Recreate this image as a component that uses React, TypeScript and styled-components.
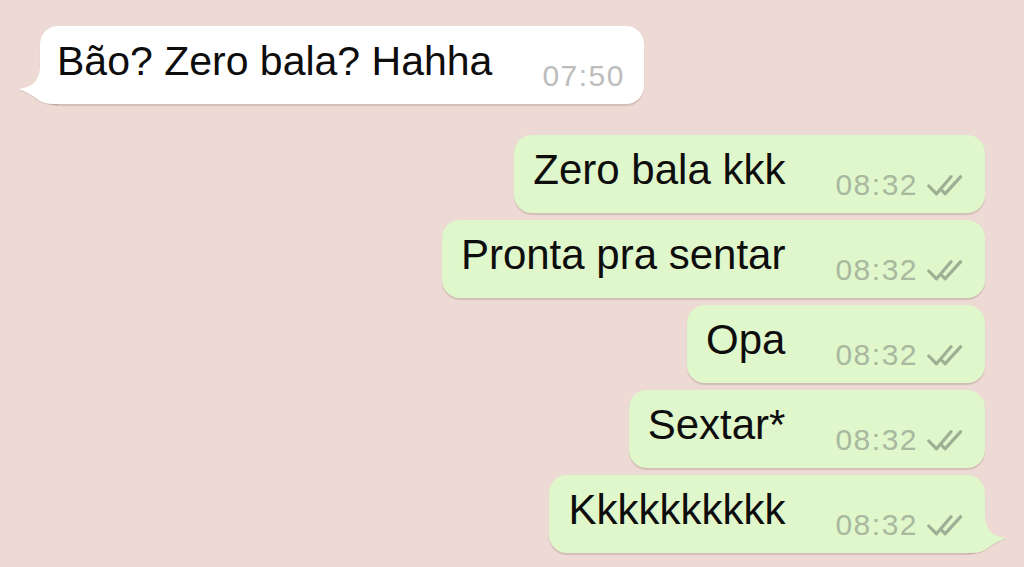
import React from "react";
import styled, { createGlobalStyle } from "styled-components";

const Global = createGlobalStyle`
  html, body { margin: 0; padding: 0; }
  body { font-family: "Liberation Sans", Arial, sans-serif; }
`;

const Screen = styled.div`
  width: 1024px;
  height: 567px;
  overflow: hidden;
  background: #eedad5;
  display: flex;
  flex-direction: column;
  padding: 26px 39px 0 40px;
  box-sizing: border-box;
`;

const Bubble = styled.div<{ $out?: boolean; $after?: number }>`
  position: relative;
  align-self: ${(p) => (p.$out ? "flex-end" : "flex-start")};
  display: flex;
  align-items: flex-start;
  gap: 50px;
  padding: 10px ${(p) => (p.$out ? 22 : 19)}px 16px ${(p) => (p.$out ? 19 : 17)}px;
  margin-bottom: ${(p) => p.$after ?? 7}px;
  background: ${(p) => (p.$out ? "#e0f6cb" : "#ffffff")};
  border-radius: 18px;
  box-shadow: 0 1.5px 1px rgba(90, 60, 50, 0.18);
`;

const Text = styled.span<{ $out?: boolean }>`
  font-size: ${(p) => (p.$out ? 42 : 41)}px;
  line-height: 50px;
  color: #0d0d0d;
  white-space: nowrap;
`;

const Meta = styled.div`
  display: flex;
  align-items: center;
  gap: 9px;
  margin-top: 28px;
  height: 24px;
`;

const Time = styled.span<{ $out?: boolean }>`
  font-size: 30px;
  line-height: 24px;
  letter-spacing: 1.5px;
  color: ${(p) => (p.$out ? "#a8b99f" : "#bdbdbd")};
`;

const Tail = styled.svg<{ $out?: boolean }>`
  position: absolute;
  bottom: 0;
  width: 40px;
  height: 40px;
  overflow: visible;
  ${(p) => (p.$out ? "right: -22px;" : "left: -22px;")}
  filter: drop-shadow(0 1.5px 0.6px rgba(90, 60, 50, 0.16));
`;

const Ticks = () => (
  <svg width="36" height="21" viewBox="0 0 36 21" fill="none">
    <path d="M1.8 11 L9.5 18.8 L24 1.8" stroke="#9db094" strokeWidth="3.2" strokeLinejoin="round" strokeLinecap="round" />
    <path d="M15.5 16 L18 18.8 L33.5 1.8" stroke="#9db094" strokeWidth="3.2" strokeLinejoin="round" strokeLinecap="round" />
  </svg>
);

type Msg = { text: string; time: string; out?: boolean; tail?: boolean; after?: number };

const messages: Msg[] = [
  { text: "Bão? Zero bala? Hahha", time: "07:50", tail: true, after: 31 },
  { text: "Zero bala kkk", time: "08:32", out: true },
  { text: "Pronta pra sentar", time: "08:32", out: true },
  { text: "Opa", time: "08:32", out: true },
  { text: "Sextar*", time: "08:32", out: true },
  { text: "Kkkkkkkkkk", time: "08:32", out: true, tail: true },
];

export default function App() {
  return (
    <>
      <Global />
      <Screen>
        {messages.map((m, i) => (
          <Bubble key={i} $out={m.out} $after={m.after}>
            <Text $out={m.out}>{m.text}</Text>
            <Meta>
              <Time $out={m.out}>{m.time}</Time>
              {m.out && <Ticks />}
            </Meta>
            {m.tail &&
              (m.out ? (
                <Tail $out viewBox="-18 -40 40 40">
                  <path
                    d="M0,-40 C0,-22 8,-17 21,-15 Q11,-11 4,-6 Q-2,0 -14,0 L-18,0 L-18,-40 Z"
                    fill="#e0f6cb"
                  />
                </Tail>
              ) : (
                <Tail viewBox="-22 -40 40 40">
                  <path
                    d="M0,-40 C0,-22 -8,-17 -21,-15 Q-11,-11 -4,-6 Q2,0 14,0 L18,0 L18,-40 Z"
                    fill="#ffffff"
                  />
                </Tail>
              ))}
          </Bubble>
        ))}
      </Screen>
    </>
  );
}
